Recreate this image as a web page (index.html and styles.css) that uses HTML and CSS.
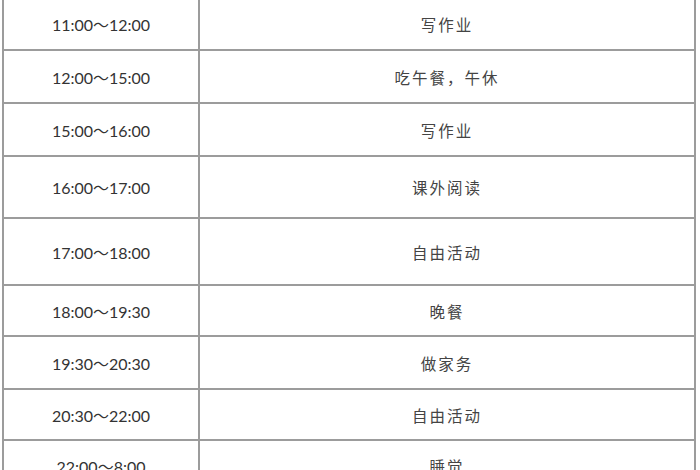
FILE: index.html
```html
<!DOCTYPE html>
<html lang="zh-CN">
<head>
<meta charset="utf-8">
<title>作息时间表</title>
<link rel="stylesheet" href="styles.css">
</head>
<body>
<table class="schedule">
  <colgroup>
    <col class="col-time">
    <col class="col-task">
  </colgroup>
  <tbody>
    <tr class="h52"><td class="time">11:00～12:00</td><td class="task">写作业</td></tr>
    <tr class="h53"><td class="time">12:00～15:00</td><td class="task">吃午餐，午休</td></tr>
    <tr class="h53"><td class="time">15:00～16:00</td><td class="task">写作业</td></tr>
    <tr class="h62"><td class="time">16:00～17:00</td><td class="task">课外阅读</td></tr>
    <tr class="h67"><td class="time">17:00～18:00</td><td class="task">自由活动</td></tr>
    <tr class="h51"><td class="time">18:00～19:30</td><td class="task">晚餐</td></tr>
    <tr class="h53"><td class="time">19:30～20:30</td><td class="task">做家务</td></tr>
    <tr class="h51"><td class="time">20:30～22:00</td><td class="task">自由活动</td></tr>
    <tr class="h52"><td class="time">22:00～8:00</td><td class="task">睡觉</td></tr>
  </tbody>
</table>
</body>
</html>
```

FILE: styles.css
```css
html, body {
  margin: 0;
  padding: 0;
  background: #ffffff;
}

body {
  overflow: hidden;
}

.schedule {
  border-collapse: collapse;
  width: 694px;
  margin: -3px 0 0 2px;
  table-layout: fixed;
}

.col-time {
  width: 196px;
}

.schedule td {
  border: 2px solid #9c9c9c;
  padding: 0;
  text-align: center;
  vertical-align: middle;
}

.time {
  font-family: Lato, "Noto Sans CJK SC", sans-serif;
  font-size: 16px;
  color: #333333;
}

.task {
  font-family: "Noto Sans CJK SC", sans-serif;
  font-size: 15.5px;
  letter-spacing: 2px;
  padding-left: 2px;
  color: #444444;
}

.h51 { height: 51px; }
.h52 { height: 52px; }
.h53 { height: 53px; }
.h62 { height: 62px; }
.h67 { height: 67px; }
```
